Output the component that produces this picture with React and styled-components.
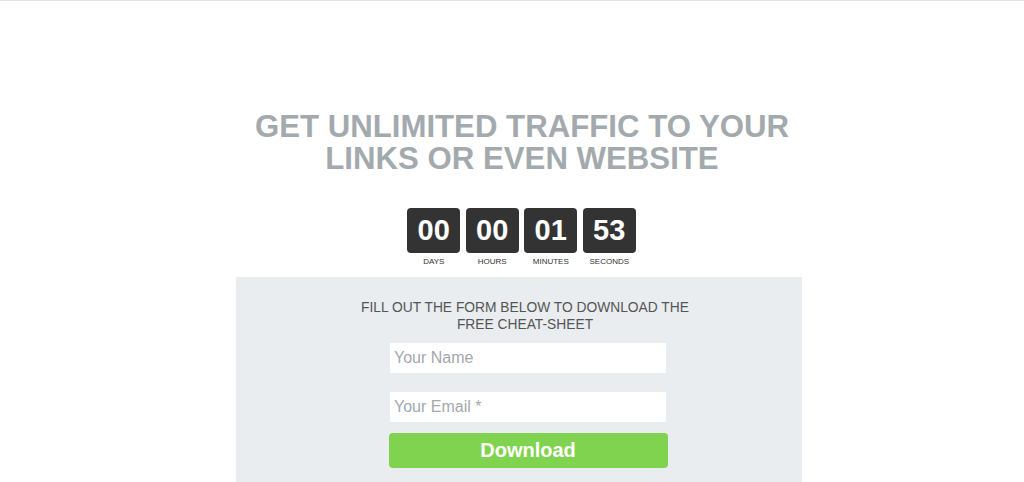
import React from "react";
import styled, { createGlobalStyle } from "styled-components";

const GlobalStyle = createGlobalStyle`
    body {
        margin: 0;
        background: #ffffff;
        font-family: "Liberation Sans", Arial, sans-serif;
    }
`;

const countdown = [
    { value: "00", label: "DAYS" },
    { value: "00", label: "HOURS" },
    { value: "01", label: "MINUTES" },
    { value: "53", label: "SECONDS" },
];

const App = () => {
    return (
        <>
            <GlobalStyle />
            <Page>
                <Title>
                    GET UNLIMITED TRAFFIC TO YOUR
                    <br />
                    LINKS OR EVEN WEBSITE
                </Title>
                <Countdown>
                    {countdown.map((c) => (
                        <TimeUnit key={c.label}>
                            <TimeBox>{c.value}</TimeBox>
                            <TimeLabel>{c.label}</TimeLabel>
                        </TimeUnit>
                    ))}
                </Countdown>
                <FormPanel>
                    <FormIntro>
                        FILL OUT THE FORM BELOW TO DOWNLOAD THE
                        <br />
                        FREE CHEAT-SHEET
                    </FormIntro>
                    <Form onSubmit={(e) => e.preventDefault()}>
                        <TextInput type="text" placeholder="Your Name" />
                        <TextInput type="email" placeholder="Your Email *" spaced />
                        <DownloadButton type="submit">Download</DownloadButton>
                    </Form>
                </FormPanel>
            </Page>
        </>
    );
};

export default App;

const Page = styled.div`
    border-top: 1px solid #e2e2ea;
    height: 481px;
    overflow: hidden;
    display: flex;
    flex-direction: column;
    align-items: center;
    padding-left: 14px;
`;

const Title = styled.h1`
    margin: 110px 0 0;
    padding-left: 6px;
    font-size: 31.2px;
    line-height: 32px;
    font-weight: 700;
    color: #a3aaae;
    text-align: center;
`;

const Countdown = styled.div`
    display: flex;
    gap: 5.5px;
    margin-top: 33px;
    padding-left: 5px;
`;

const TimeUnit = styled.div`
    display: flex;
    flex-direction: column;
    align-items: center;
`;

const TimeBox = styled.div`
    width: 53px;
    height: 45px;
    border-radius: 4px;
    background: #333333;
    color: #ffffff;
    font-size: 29px;
    font-weight: 700;
    display: flex;
    align-items: center;
    justify-content: center;
`;

const TimeLabel = styled.div`
    margin-top: 4px;
    font-size: 8px;
    line-height: 10px;
    color: #333333;
`;

const FormPanel = styled.div`
    margin-top: 10px;
    width: 566px;
    flex: 1;
    box-sizing: border-box;
    background: #eaedf0;
    padding: 22px 0 0 16px;
    display: flex;
    flex-direction: column;
    align-items: center;
`;

const FormIntro = styled.p`
    margin: 0;
    padding-right: 4px;
    font-size: 13.8px;
    line-height: 17px;
    color: #555555;
    text-align: center;
`;

const Form = styled.form`
    margin-top: 10px;
    padding-left: 2px;
    width: 279px;
    display: flex;
    flex-direction: column;
    align-items: center;
`;

const TextInput = styled.input`
    width: 276px;
    height: 30px;
    box-sizing: border-box;
    border: none;
    outline: none;
    background: #ffffff;
    padding: 0 4px;
    margin-top: ${(props) => (props.spaced ? "19px" : "0")};
    font-family: "Liberation Sans", Arial, sans-serif;
    font-size: 16px;
    color: #333;

    &::placeholder {
        color: #a3a8ad;
    }
`;

const DownloadButton = styled.button`
    margin-top: 11px;
    width: 279px;
    height: 35px;
    border: none;
    border-radius: 4px;
    background: #80d34f;
    color: #ffffff;
    font-family: "Liberation Sans", Arial, sans-serif;
    font-size: 20px;
    font-weight: 700;
    cursor: pointer;
`;
